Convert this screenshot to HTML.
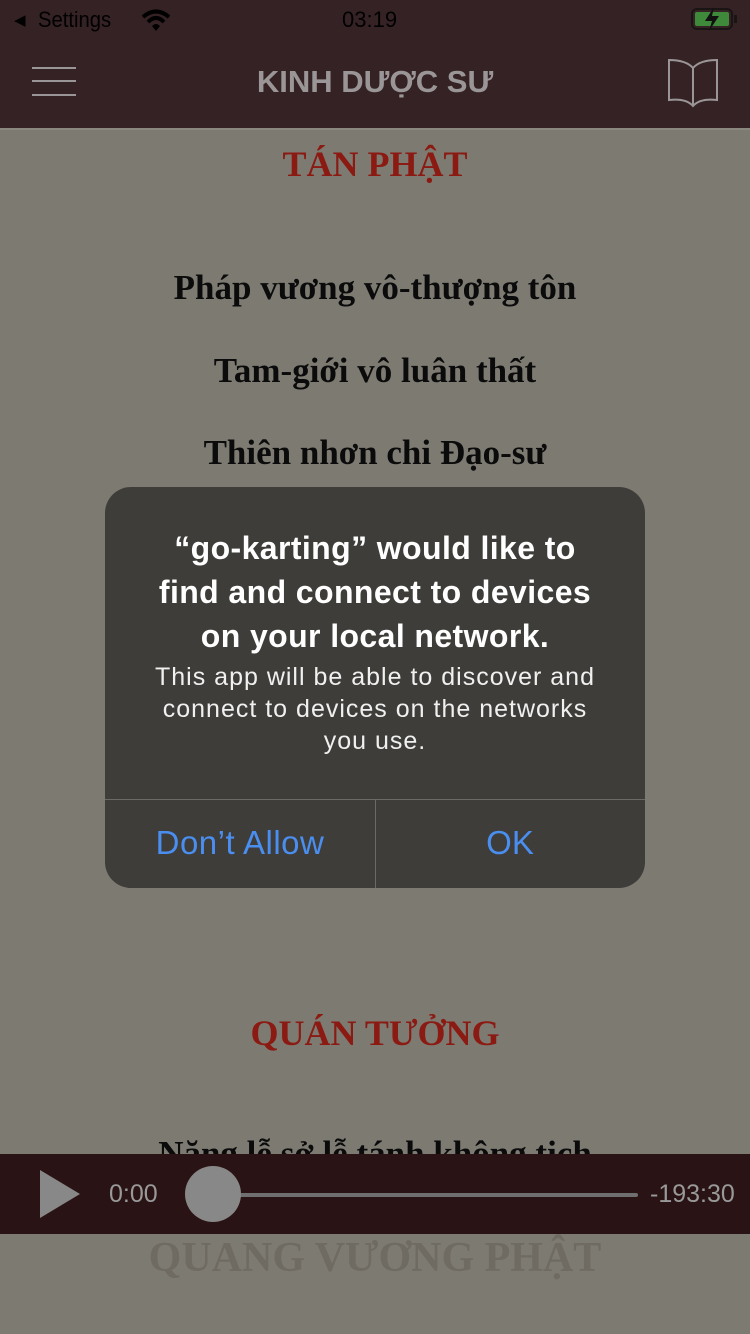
<!DOCTYPE html>
<html><head><meta charset="utf-8"><style>
*{margin:0;padding:0;box-sizing:border-box}
body{width:750px;height:1334px;overflow:hidden;position:relative;background:#7d7a72;font-family:"Liberation Sans",sans-serif}
.abs{position:absolute}
.hdr{left:0;top:0;width:750px;height:128px;background:#352224}
.t{position:absolute;left:0;width:750px;text-align:center;font-family:"Liberation Serif",serif;font-weight:bold;white-space:nowrap}
.t span{display:inline-block}
.red{color:#8a1a12;font-size:36px}
.blk{color:#0b0b0b;font-size:35px}
.alert{left:105px;top:487px;width:540px;height:401px;background:#3e3d39;border-radius:26px;overflow:hidden;color:#fff;text-align:center}
</style></head><body>
<div class="abs hdr"></div>
<div class="abs" style="left:14px;top:11px;font-size:15px;color:#000">◀</div>
<div class="abs" style="left:38px;top:7px;font-size:22px;color:#000;transform:scaleX(.92);transform-origin:left">Settings</div>
<svg class="abs" style="left:141px;top:8px" width="30" height="24" viewBox="0 0 30 24"><path d="M2 9 Q15 -2 28 9" stroke="#000" stroke-width="4" fill="none"/><path d="M7 14 Q15 6 23 14" stroke="#000" stroke-width="4" fill="none"/><path d="M11 18 L15 23 L19 18 Q15 14 11 18Z" fill="#000"/></svg>
<div class="abs" style="left:342px;top:7px;font-size:22px;color:#000">03:19</div>
<div class="abs" style="left:691px;top:8px;width:42px;height:22px;border:2.5px solid #1a1414;border-radius:6px;padding:2px"><div style="width:100%;height:100%;background:#3f8a3a;border-radius:2px"></div></div>
<div class="abs" style="left:734px;top:15px;width:3px;height:8px;background:#1a1414"></div>
<svg class="abs" style="left:702px;top:6px" width="20" height="26" viewBox="0 0 20 26"><path d="M12 1 L3 15 H10 L7 25 L17 10 H10Z" fill="#111"/></svg>
<div class="abs" style="left:32px;top:67px;width:44px;height:2px;background:#9a9596"></div>
<div class="abs" style="left:32px;top:80px;width:44px;height:2px;background:#9a9596"></div>
<div class="abs" style="left:32px;top:94px;width:44px;height:2px;background:#9a9596"></div>
<div class="abs" style="left:0;width:750px;top:64px;text-align:center;font-size:31px;font-weight:bold;color:#9a9596">KINH DƯỢC SƯ</div>
<svg class="abs" style="left:666px;top:56px" width="54" height="52" viewBox="0 0 54 52"><path d="M27 12 Q20 4 3 4 V44 Q20 42 27 50 Q34 42 51 44 V4 Q34 4 27 12 V50" stroke="#9a9596" stroke-width="2" fill="none"/></svg>
<div class="abs" style="left:0;top:128px;width:750px;height:2px;background:#8a877f"></div>
<div class="t red" style="top:143px"><span>TÁN PHẬT</span></div>
<div class="t blk" style="top:268px"><span>Pháp vương vô-thượng tôn</span></div>
<div class="t blk" style="top:351px"><span>Tam-giới vô luân thất</span></div>
<div class="t blk" style="top:433px"><span>Thiên nhơn chi Đạo-sư</span></div>
<div class="t red" style="top:1012px"><span>QUÁN TƯỞNG</span></div>
<div class="t blk" style="top:1134px"><span>Năng lễ sở lễ tánh không tịch</span></div>
<div class="t" style="top:1234px;font-size:42px;color:#6f6b63"><span>QUANG VƯƠNG PHẬT</span></div>
<div class="abs alert">
<div style="position:absolute;top:39px;left:0;width:540px;font-size:32px;letter-spacing:0.4px;font-weight:bold;line-height:44px">“go-karting” would like to<br>find and connect to devices<br>on your local network.</div>
<div style="position:absolute;top:174px;left:0;width:540px;font-size:25px;letter-spacing:1px;line-height:32px;color:#f0f0f0">This app will be able to discover and<br>connect to devices on the networks<br>you use.</div>
<div style="position:absolute;top:312px;left:0;width:540px;height:1px;background:#6b6a66"></div>
<div style="position:absolute;top:312px;left:270px;width:1px;height:90px;background:#6b6a66"></div>
<div style="position:absolute;top:337px;left:0;width:270px;font-size:33px;letter-spacing:0.5px;color:#4a8ef0">Don’t Allow</div>
<div style="position:absolute;top:337px;left:270px;width:270px;font-size:33px;color:#4a8ef0">OK</div>
</div>
<div class="abs" style="left:0;top:1154px;width:750px;height:80px;background:#291314"></div>
<svg class="abs" style="left:38px;top:1168px" width="44" height="52" viewBox="0 0 44 52"><path d="M2 2 L42 26 L2 50Z" fill="#888"/></svg>
<div class="abs" style="left:109px;top:1180px;font-size:25px;color:#999">0:00</div>
<div class="abs" style="left:235px;top:1193px;width:403px;height:4px;background:#6f6f6f;border-radius:2px"></div>
<div class="abs" style="left:185px;top:1166px;width:56px;height:56px;border-radius:50%;background:#888"></div>
<div class="abs" style="left:650px;top:1180px;font-size:25px;color:#999">-193:30</div>
</body></html>
